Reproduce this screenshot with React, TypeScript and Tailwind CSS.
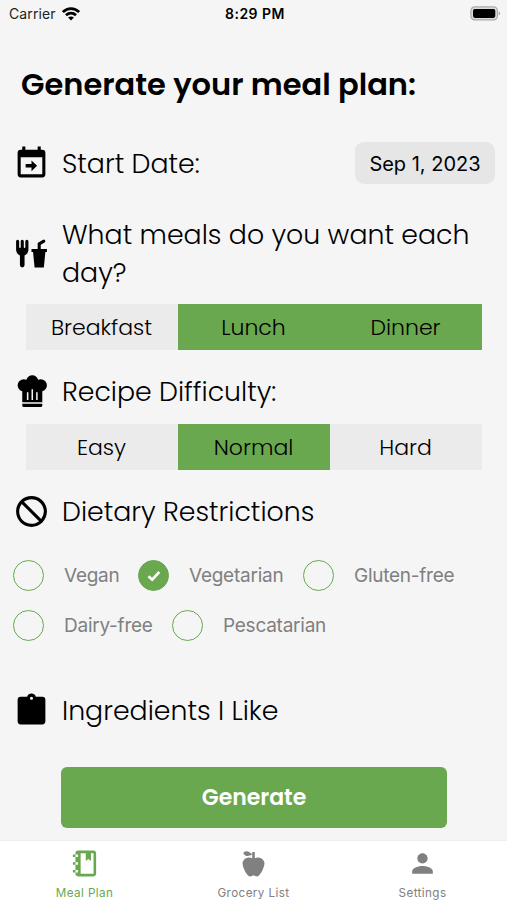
import type { ReactNode } from "react";
import clsx from "clsx";
import { MdBlock, MdPerson } from "react-icons/md";

const HEADING_FONT = "font-['Poppins','Inter',sans-serif]";

const Glyph = ({ d, className }: { d: string; className?: string }) => (
  <svg viewBox="0 0 24 24" fill="currentColor" fillRule="evenodd" className={clsx("shrink-0", className)}>
    <path d={d} />
  </svg>
);

const CALENDAR =
  "M19 19H5V8H19M19 3H18V1H16V3H8V1H6V3H5A2 2 0 0 0 3 5V19A2 2 0 0 0 5 21H19A2 2 0 0 0 21 19V5A2 2 0 0 0 19 3M12 17L15.6 13.5L12 10V12.4H8.2V14.6H12Z";
const FORK_DRINK =
  "M3 3A1 1 0 0 0 2 4V9.5C2 11.19 3.03 12.63 4.5 13.22V19.5A1.5 1.5 0 0 0 7.5 19.5V13.22C8.97 12.63 10 11.19 10 9.5V4A1 1 0 0 0 8 4V8A.5.5 0 0 1 7 8V4A1 1 0 0 0 5 4V8A.5.5 0 0 1 4 8V4A1 1 0 0 0 3 3M19.88 3C19.75 3 19.62 3.09 19.5 3.16L16 5.25V9H12V11H13L14 21H20L21 11H22V9H18V6.34L20.5 4.84C21 4.56 21.13 4 20.84 3.5C20.63 3.14 20.26 2.95 19.88 3Z";
const CHEF_HAT =
  "M12.5 1.5C10.73 1.5 9.17 2.67 8.67 4.37C8.14 4.13 7.58 4 7 4A4 4 0 0 0 3 8C3 9.82 4.24 11.41 6 11.87V19H19V11.87C20.76 11.41 22 9.82 22 8A4 4 0 0 0 18 4C17.42 4 16.86 4.13 16.33 4.37C15.83 2.67 14.27 1.5 12.5 1.5M12 10.5H13V17.5H12V10.5M9 12.5H10V17.5H9V12.5M15 12.5H16V17.5H15V12.5M6 20V21A1 1 0 0 0 7 22H18A1 1 0 0 0 19 21V20H6Z";
const CLIPBOARD =
  "M12 3A1 1 0 0 1 12 5A1 1 0 0 1 12 3M19 3H14.82C14.4 1.84 13.3 1 12 1C10.7 1 9.6 1.84 9.18 3H5A2 2 0 0 0 3 5V19A2 2 0 0 0 5 21H19A2 2 0 0 0 21 19V5A2 2 0 0 0 19 3Z";
const APPLE =
  "M20 10C22 13 17 22 15 22C13 22 13 21 12 21C11 21 11 22 9 22C7 22 2 13 4 10C6 7 9 7 11 8V5C5.38 8.07 4.11 3.78 4.11 3.78C4.11 3.78 6.77.19 11 5V3H13V8C15 7 18 7 20 10Z";
const NOTEBOOK =
  "M3 7V5H5V4C5 2.89 5.9 2 7 2H19C20.05 2 21 2.95 21 4V20C21 21.05 20.05 22 19 22H7C5.95 22 5 21.05 5 20V19H3V17H5V13H3V11H5V7H3M7 11H5V13H7V11M7 7V5H5V7H7M7 19V17H5V19H7M9 4V20H19V4H17V10L15 8.5L13 10V4H9Z";

const StatusBar = () => (
  <div className="grid h-[27px] shrink-0 grid-cols-3 items-center pl-[9px] pr-[6px] text-[14px] text-[#222]">
    <div className="flex items-center gap-[6px]">
      <span className="tracking-[0.1px]">Carrier</span>
      <svg viewBox="0 0 18 14" className="h-[14px] w-[18px]" fill="none" stroke="#000" strokeWidth="2.7">
        <path d="M.9 5.1C5.4.5 12.6.5 17.1 5.1M4 8.3c2.8-2.8 7.2-2.8 10 0" />
        <path d="M9 13.5 6.1 10.6c1.7-1.5 4.1-1.5 5.8 0z" fill="#000" stroke="none" />
      </svg>
    </div>
    <span className="text-center font-semibold tracking-[0.5px] text-black">8:29 PM</span>
    <svg viewBox="0 0 31 15" className="h-[15px] w-[31px] justify-self-end">
      <rect x=".9" y=".9" width="26.5" height="13" rx="3.8" fill="#ddd" stroke="#aaa" strokeWidth="1.2" />
      <rect x="3" y="3" width="22.3" height="8.9" rx="1.8" />
      <path d="M28.7 5.2q3 2.2 0 4.4z" fill="#aaa" />
    </svg>
  </div>
);

const SectionTitle = ({ icon, children }: { icon: ReactNode; children: ReactNode }) => (
  <div className="flex items-center gap-3 pl-[13px]">
    {icon}
    <h2 className={clsx(HEADING_FONT, "pt-px text-[26.8px] font-light leading-[37.5px] text-black")}>{children}</h2>
  </div>
);

type Segment = { label: string; active?: boolean };

const Segments = ({ items }: { items: Segment[] }) => (
  <div className="ml-[26px] grid h-[46px] w-[456px] shrink-0 grid-cols-3">
    {items.map((item) => (
      <button
        key={item.label}
        className={clsx(
          HEADING_FONT,
          "pr-px text-[22px] font-light text-black",
          item.active ? "bg-[#6aa84f]" : "bg-[#ebebeb]"
        )}
      >
        {item.label}
      </button>
    ))}
  </div>
);

const Option = ({ label, checked, className }: { label: string; checked?: boolean; className?: string }) => (
  <label className={clsx("flex h-[31px] items-center gap-[20px]", className)}>
    <span
      className={clsx(
        "flex size-[31px] shrink-0 items-center justify-center rounded-full border-[1.5px] border-[#6aa84f]",
        checked && "bg-[#6aa84f]"
      )}
    >
      {checked && (
        <svg viewBox="0 0 14 12" className="h-[12px] w-[14px]" fill="none" stroke="#fff" strokeWidth="2.6">
          <path d="M1.5 6.2 5.2 9.6 12.3 2" />
        </svg>
      )}
    </span>
    <span className="whitespace-nowrap pt-[2px] text-[19px] tracking-[-0.25px] text-[#808080]">{label}</span>
  </label>
);

const Tab = ({ icon, label, active }: { icon: ReactNode; label: string; active?: boolean }) => (
  <div className={clsx("flex flex-col items-center pt-[7px]", active ? "text-[#6aa84f]" : "text-[#808080]")}>
    {icon}
    <span className="mt-[6px] text-[11.7px] leading-[16px] tracking-[0.4px]">{label}</span>
  </div>
);

export default function App() {
  return (
    <div className="flex h-[900px] w-[507px] flex-col overflow-hidden bg-[#f5f5f5] font-['Inter',sans-serif]">
      <StatusBar />

      <main className="flex flex-1 flex-col">
        <h1 className={clsx(HEADING_FONT, "mt-[37px] pl-[21px] text-[30.5px] font-semibold leading-[42px]")}>
          Generate your meal plan:
        </h1>

        <div className="mt-[36px] flex h-[42px] items-center justify-between pr-3">
          <SectionTitle icon={<Glyph d={CALENDAR} className="size-[37px]" />}>Start Date:</SectionTitle>
          <button className="h-[42px] w-[140px] rounded-[9px] bg-[#e6e6e6] pt-px text-[20px] text-black">Sep 1, 2023</button>
        </div>

        <div className="mt-[31px] h-[89px]">
          <SectionTitle icon={<Glyph d={FORK_DRINK} className="size-[37px]" />}>
            What meals do you want each
            <br />
            day?
          </SectionTitle>
        </div>
        <Segments
          items={[{ label: "Breakfast" }, { label: "Lunch", active: true }, { label: "Dinner", active: true }]}
        />

        <div className="mt-[22px] h-[52px]">
          <SectionTitle icon={<Glyph d={CHEF_HAT} className="size-[37px]" />}>Recipe Difficulty:</SectionTitle>
        </div>
        <Segments items={[{ label: "Easy" }, { label: "Normal", active: true }, { label: "Hard" }]} />

        <div className="mt-[22px] h-[38px]">
          <SectionTitle icon={<MdBlock className="size-[37px] shrink-0 -scale-x-100" />}>
            Dietary Restrictions
          </SectionTitle>
        </div>

        <div className="mt-[30px] flex flex-col gap-[19px] pl-[13px]">
          <div className="flex">
            <Option label="Vegan" className="w-[125px]" />
            <Option label="Vegetarian" checked className="w-[165px]" />
            <Option label="Gluten-free" />
          </div>
          <div className="flex">
            <Option label="Dairy-free" className="w-[159px]" />
            <Option label="Pescatarian" />
          </div>
        </div>

        <div className="mt-[50px] h-[38px]">
          <SectionTitle icon={<Glyph d={CLIPBOARD} className="size-[37px]" />}>Ingredients I Like</SectionTitle>
        </div>

        <button
          className={clsx(
            HEADING_FONT,
            "mt-[38px] ml-[61px] h-[61px] w-[386px] shrink-0 rounded-md bg-[#6aa84f] text-[22px] font-semibold text-white"
          )}
        >
          Generate
        </button>
      </main>

      <nav className="grid h-[60px] shrink-0 grid-cols-3 border-t border-[#eee] bg-white">
        <Tab icon={<Glyph d={NOTEBOOK} className="size-[31px]" />} label="Meal Plan" active />
        <Tab icon={<Glyph d={APPLE} className="size-[31px]" />} label="Grocery List" />
        <Tab icon={<MdPerson className="size-[31px]" />} label="Settings" />
      </nav>
    </div>
  );
}
